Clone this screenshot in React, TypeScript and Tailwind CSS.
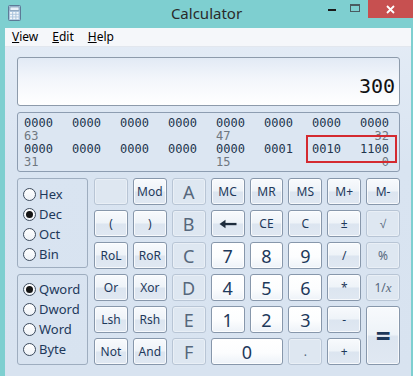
import React from "react";

type Kind = "op" | "num" | "dis";

const kindClass: Record<Kind, string> = {
  op: "border-[#8797ab] bg-[linear-gradient(to_bottom,#f8fafd_0%,#eef3f8_48%,#dce5f0_52%,#e0e8f2_100%)] text-[#1e395b] shadow-[inset_0_0_0_1px_rgba(255,255,255,0.75)]",
  num: "border-[#8797ab] bg-[linear-gradient(to_bottom,#ffffff_0%,#fcfdfe_55%,#edf2f8_100%)] text-[#1e395b] shadow-[inset_0_0_0_1px_rgba(255,255,255,0.8)]",
  dis: "border-[#b8c5d5] bg-[#dee7f1] text-[#56677c] shadow-[inset_0_0_0_1px_rgba(255,255,255,0.35)]",
};

const Btn = ({
  kind = "op",
  className = "",
  children,
}: {
  kind?: Kind;
  className?: string;
  children?: React.ReactNode;
}) => (
  <div
    className={`flex items-center justify-center rounded-[3px] border ${kindClass[kind]} ${className}`}
  >
    {children}
  </div>
);

const Radio = ({ label, on = false }: { label: string; on?: boolean }) => (
  <div className="flex h-[20px] items-center gap-[3px]">
    <div className="flex h-[13px] w-[13px] items-center justify-center rounded-full border border-[#3d4b5d] bg-[linear-gradient(to_bottom,#ffffff,#eef2f7)]">
      {on && <div className="h-[7px] w-[7px] rounded-full bg-[#151515]" />}
    </div>
    <span className="text-[13px] leading-none text-[#1e395b]">{label}</span>
  </div>
);

const BackArrow = () => (
  <svg width="18" height="10" viewBox="0 0 18 10">
    <path d="M0.5 5 L6.5 0.8 L6.5 9.2 Z" fill="#1e2c3c" />
    <rect x="5" y="3.9" width="12.5" height="2.3" fill="#1e2c3c" />
  </svg>
);

const CalcIcon = () => (
  <svg width="13" height="16" viewBox="0 0 13 16">
    <rect x="0.5" y="0.5" width="12" height="15" rx="1" fill="#a9c3dc" stroke="#5d7a97" />
    <rect x="2" y="2" width="9" height="3.5" fill="#e8f1f9" stroke="#6c88a3" strokeWidth="0.6" />
    {[0, 1, 2].map((r) =>
      [0, 1, 2].map((c) => (
        <rect key={`${r}-${c}`} x={2 + c * 3.2} y={7 + r * 2.7} width="2.2" height="1.8" fill="#f4f8fb" />
      ))
    )}
  </svg>
);

const row1 = ["0000", "0000", "0000", "0000", "0000", "0000", "0000", "0000"];
const row2 = ["0000", "0000", "0000", "0000", "0000", "0001", "0010", "1100"];

const BitRow = ({ groups }: { groups: string[] }) => (
  <div className="flex h-[13px] leading-[13px] text-[#22354d]">
    {groups.map((g, i) => (
      <span key={i} className={i < 7 ? "w-[48px] shrink-0" : "w-[29px] shrink-0"}>
        {g}
      </span>
    ))}
  </div>
);

const BitLabels = ({ a, b, c }: { a: string; b: string; c: string }) => (
  <div className="flex h-[13px] leading-[13px] text-[#6f7780]">
    <span className="w-[192px] shrink-0">{a}</span>
    <span className="w-[144px] shrink-0">{b}</span>
    <span className="w-[29px] shrink-0 text-right">{c}</span>
  </div>
);

export default function App() {
  return (
    <div className="flex h-[376px] w-[413px] flex-col overflow-hidden bg-[#7ecfd0] font-['Noto_Sans',sans-serif]">
      {/* title bar */}
      <div className="relative flex h-[28px] shrink-0 items-center">
        <div className="ml-[8px] mt-[-2px]">
          <CalcIcon />
        </div>
        <div className="absolute left-0 right-0 top-[3px] text-center text-[15px] leading-[20px] text-[#2a2a2a]">
          Calculator
        </div>
        <div className="absolute right-0 top-0 flex h-[18px] items-start">
          <div className="mr-[14px] mt-[9px] h-[2px] w-[8px] bg-[#1a1a1a]" />
          <div className="mr-[8px] mt-[4px] h-[8px] w-[10px] border border-t-2 border-[#4a5a60]" />
          <div className="flex h-[18px] w-[45px] items-center justify-center bg-[#c75050]">
            <svg width="9" height="9" viewBox="0 0 9 9">
              <path d="M1 1 L8 8 M8 1 L1 8" stroke="#fff" strokeWidth="1.8" />
            </svg>
          </div>
        </div>
      </div>

      <div className="ml-[5px] mr-[2px] flex flex-1 flex-col bg-[linear-gradient(to_bottom,#e4ecf6,#d9e4f1_40%,#d8e3f0)]">
        {/* menu */}
        <div className="flex h-[19px] shrink-0 items-center gap-[14px] border-b border-[#e2e7ee] bg-[#f5f7fa] pl-[7px] text-[12px] leading-none text-black">
          <span><span className="underline">V</span>iew</span>
          <span><span className="underline">E</span>dit</span>
          <span><span className="underline">H</span>elp</span>
        </div>

        <div className="flex flex-col gap-[6px] pl-[12px] pr-[11px] pt-[10px]">
          {/* display */}
          <div className="flex h-[49px] items-end justify-end rounded-[3px] border border-[#8d9bab] bg-[linear-gradient(to_bottom,#e2eaf5_0%,#f3f6fb_45%,#ffffff_100%)] pb-[9px] pr-[4px]">
            <span className="font-['DejaVu_Sans_Mono',monospace] text-[20px] leading-none text-[#111]">300</span>
          </div>

          {/* binary */}
          <div className="relative h-[60px] rounded-[3px] border border-[#8d9db1] bg-[#dce6f2] pl-[6px] pt-[4px] font-['DejaVu_Sans_Mono',monospace] text-[12px]">
            <BitRow groups={row1} />
            <BitLabels a="63" b="47" c="32" />
            <BitRow groups={row2} />
            <BitLabels a="31" b="15" c="0" />
            <div className="absolute left-[288px] top-[22px] h-[28px] w-[91px] border-2 border-[#d42a30]" />
          </div>

          {/* keypad */}
          <div className="flex gap-[6px]">
            <div className="flex w-[71px] shrink-0 flex-col gap-[6px]">
              <div className="h-[90px] rounded-[3px] border border-[#9eadbf] pl-[5px] pt-[5px]">
                <Radio label="Hex" />
                <Radio label="Dec" on />
                <Radio label="Oct" />
                <Radio label="Bin" />
              </div>
              <div className="h-[91px] rounded-[3px] border border-[#9eadbf] pl-[5px] pt-[4px]">
                <Radio label="Qword" on />
                <Radio label="Dword" />
                <Radio label="Word" />
                <Radio label="Byte" />
              </div>
            </div>

            <div className="grid w-[306px] grid-cols-8 grid-rows-[repeat(6,27px)] gap-[5px] text-[12px] leading-none">
              <Btn kind="dis" />
              <Btn>Mod</Btn>
              <Btn kind="dis" className="text-[18px]">A</Btn>
              <Btn>MC</Btn>
              <Btn>MR</Btn>
              <Btn>MS</Btn>
              <Btn>M+</Btn>
              <Btn>M-</Btn>

              <Btn>(</Btn>
              <Btn>)</Btn>
              <Btn kind="dis" className="text-[18px]">B</Btn>
              <Btn><BackArrow /></Btn>
              <Btn>CE</Btn>
              <Btn>C</Btn>
              <Btn>±</Btn>
              <Btn kind="dis">√</Btn>

              <Btn>RoL</Btn>
              <Btn>RoR</Btn>
              <Btn kind="dis" className="text-[18px]">C</Btn>
              <Btn kind="num" className="text-[18px]">7</Btn>
              <Btn kind="num" className="text-[18px]">8</Btn>
              <Btn kind="num" className="text-[18px]">9</Btn>
              <Btn>/</Btn>
              <Btn kind="dis">%</Btn>

              <Btn>Or</Btn>
              <Btn>Xor</Btn>
              <Btn kind="dis" className="text-[18px]">D</Btn>
              <Btn kind="num" className="text-[18px]">4</Btn>
              <Btn kind="num" className="text-[18px]">5</Btn>
              <Btn kind="num" className="text-[18px]">6</Btn>
              <Btn>*</Btn>
              <Btn kind="dis">1/<i className="font-['Liberation_Serif',serif] text-[13px]">x</i></Btn>

              <Btn>Lsh</Btn>
              <Btn>Rsh</Btn>
              <Btn kind="dis" className="text-[18px]">E</Btn>
              <Btn kind="num" className="text-[18px]">1</Btn>
              <Btn kind="num" className="text-[18px]">2</Btn>
              <Btn kind="num" className="text-[18px]">3</Btn>
              <Btn>-</Btn>
              <Btn className="row-span-2 text-[26px] font-bold">=</Btn>

              <Btn>Not</Btn>
              <Btn>And</Btn>
              <Btn kind="dis" className="text-[18px]">F</Btn>
              <Btn kind="num" className="col-span-2 text-[18px]">0</Btn>
              <Btn kind="dis">.</Btn>
              <Btn>+</Btn>
            </div>
          </div>
        </div>
      </div>
    </div>
  );
}
